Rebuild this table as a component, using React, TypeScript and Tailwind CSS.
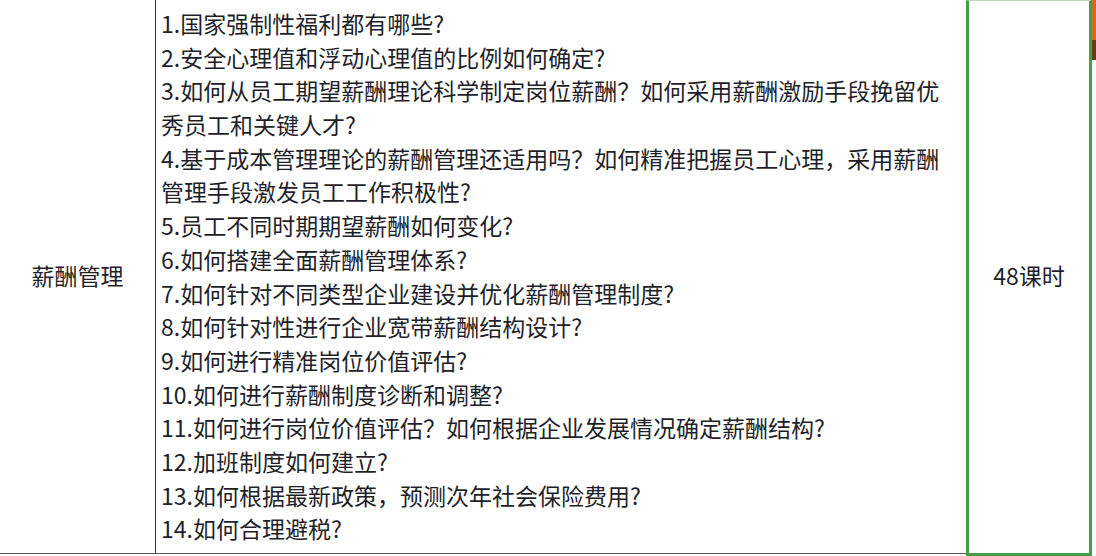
const lines = [
  '1.国家强制性福利都有哪些?',
  '2.安全心理值和浮动心理值的比例如何确定?',
  '3.如何从员工期望薪酬理论科学制定岗位薪酬？如何采用薪酬激励手段挽留优',
  '秀员工和关键人才?',
  '4.基于成本管理理论的薪酬管理还适用吗？如何精准把握员工心理，采用薪酬',
  '管理手段激发员工工作积极性?',
  '5.员工不同时期期望薪酬如何变化?',
  '6.如何搭建全面薪酬管理体系?',
  '7.如何针对不同类型企业建设并优化薪酬管理制度?',
  '8.如何针对性进行企业宽带薪酬结构设计?',
  '9.如何进行精准岗位价值评估?',
  '10.如何进行薪酬制度诊断和调整?',
  '11.如何进行岗位价值评估？如何根据企业发展情况确定薪酬结构?',
  '12.加班制度如何建立?',
  '13.如何根据最新政策，预测次年社会保险费用?',
  '14.如何合理避税?',
]

export default function App() {
  return (
    <div
      className="w-[1096px] h-[556px] bg-white overflow-hidden flex text-[#1f1f2a]"
      style={{ fontFamily: '"Microsoft YaHei", "Noto Sans CJK SC", sans-serif' }}
    >
      <div className="flex flex-1 h-[554px] border-b border-[#555]">
        {/* category */}
        <div className="w-[156px] border-r border-[#333] flex items-center justify-center text-[23px] pb-[3px]">
          薪酬管理
        </div>

        {/* questions */}
        <div className="flex-1 flex flex-col justify-center pl-[5px] text-[23px] leading-[33.7px] whitespace-nowrap">
          {lines.map((l, i) => (
            <div key={i}>{l}</div>
          ))}
        </div>
      </div>

      {/* hours, selected cell */}
      <div className="w-[126px] h-[556px] flex items-center justify-center border-x-[3px] border-b-[3px] border-t border-[#43a047] border-t-[#b9dcb9] text-[23px] pb-[3px]">
        48课时
      </div>

      <div className="w-[4px] h-[556px] flex flex-col">
        <div className="h-[40px] bg-[#d2691e]" />
        <div className="h-[20px] bg-[#6b3a12]" />
        <div className="flex-1 bg-white" />
      </div>
    </div>
  )
}
